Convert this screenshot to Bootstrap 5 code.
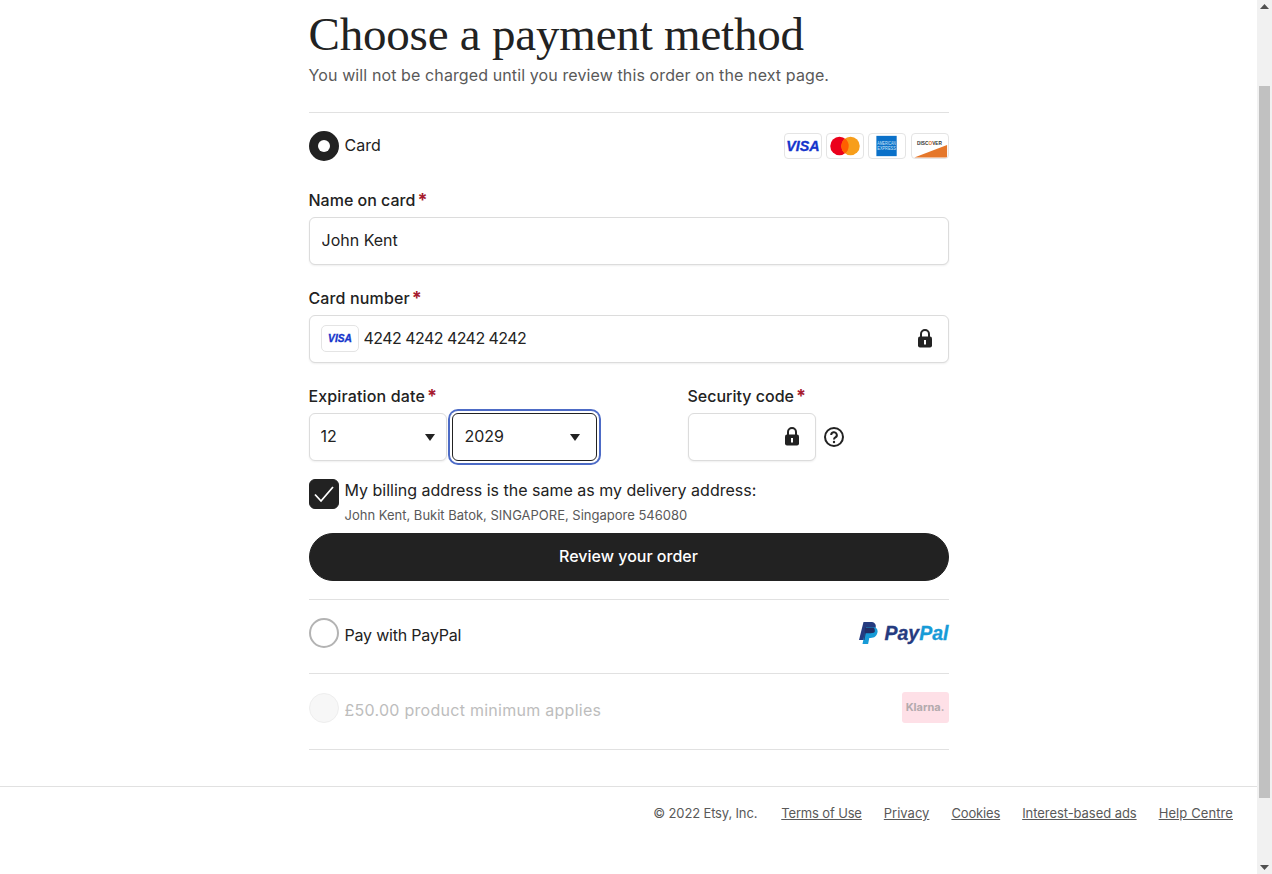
<!DOCTYPE html>
<html lang="en">
<head>
    <meta charset="UTF-8">
    <meta name="viewport" content="width=device-width, initial-scale=1.0">
    <title>Choose a payment method</title>
    <link href="https://cdn.jsdelivr.net/npm/bootstrap@5.3.2/dist/css/bootstrap.min.css" rel="stylesheet">
    <style>
        html, body { height: 100%; overflow: hidden; }
        body { font-family: Inter, "Noto Sans", sans-serif; color: #222; font-size: 16px; }
        .page-col { min-width: 0; height: 874px; }
        .checkout { width: 640px; margin: 0 auto; }
        .page-title { font-family: "Liberation Serif", serif; font-weight: 400; font-size: 47px; line-height: 56px; margin: 6px 0 0; letter-spacing: -.2px; }
        .page-sub { color: #595959; line-height: 24px; margin: 0; padding-top: 1px; padding-bottom: 25px; border-bottom: 1px solid #e1e1e1; letter-spacing: .11px; }
        .pay-row { height: 30px; }
        .card-row { margin-top: 18px; }
        .pay-radio.form-check-input { width: 30px; height: 30px; margin: 0; border: 2px solid #b3b3b3; flex: none; box-shadow: none; }
        .pay-radio.form-check-input:checked { background-color: #222; border-color: #222; background-image: url("data:image/svg+xml,<svg xmlns='http://www.w3.org/2000/svg' viewBox='-4 -4 8 8'><circle r='1.85' fill='white'/></svg>"); }
        .pay-radio.form-check-input:disabled { opacity: 1; background-color: #f7f7f7; border: 1px solid #eee; }
        .pay-text { line-height: 24px; margin-left: 6px; }
        .text-up { margin-top: -2px; }
        .text-down { margin-top: 4px; }
        .spaced { letter-spacing: -.2px; }
        .faded { color: #bdbdbd; letter-spacing: .27px; }
        .logo-box { width: 38px; height: 26px; border: 1px solid #e4e4e4; border-radius: 4px; display: block; background: #fff; }
        .logo-last { margin-left: 1px; }
        .field-label { font-weight: 500; line-height: 24px; margin: 0 0 5px; display: block; }
        .label-wide { letter-spacing: .14px; }
        .req { color: #a61a2e; font-weight: 700; font-size: 18px; line-height: 1; margin-left: 2px; }
        .name-block { margin-top: 27px; }
        .field-block { margin-top: 21px; }
        .etsy-input.form-control, .etsy-select.form-select { height: 48px; border: 1px solid #dcdcdc; border-radius: 6px; color: #222; font-size: 16px; box-shadow: 0 1px 2px rgba(34,34,34,.07); background-color: #fff; }
        .etsy-input.form-control { padding: 0 12px 2px; }
        .etsy-select.form-select { padding: 0 11px 2px; background-image: url("data:image/svg+xml,<svg xmlns='http://www.w3.org/2000/svg' viewBox='0 0 10 7'><path d='M0 0h10L5 7z' fill='%23222'/></svg>"); background-size: 10px 7px; background-position: right 11px center; }
        .select-month { width: 138px; }
        .select-year.form-select { width: 145px; margin-left: 5px; border-color: #222; box-shadow: 0 0 0 2px #fff, 0 0 0 4px #4d6bc6; padding-left: 12px; background-position: right 16px center; }
        .input-wrap { position: relative; }
        .input-card.form-control { padding-left: 54px; letter-spacing: -.55px; }
        .card-chip { position: absolute; left: 12px; top: 10px; width: 38px; height: 27px; border-radius: 5px; }
        .lock-icon { position: absolute; right: 16px; top: 14px; width: 16px; height: 19px; }
        .date-col { width: 379px; }
        .cvv-box { width: 128px; }
        .check-row { margin-top: 18px; }
        .check-mark.form-check-input { width: 30px; height: 30px; margin: 0; border-radius: 6px; flex: none; box-shadow: none; }
        .check-mark.form-check-input:checked { background-color: #222; border-color: #222; background-size: 30px 30px; background-image: url("data:image/svg+xml,<svg xmlns='http://www.w3.org/2000/svg' viewBox='0 0 30 30'><path d='M6 15.500l6 6.500L24 8' fill='none' stroke='white' stroke-width='1.8'/></svg>"); }
        .check-copy { margin-top: -1px; }
        .addr-line { font-size: 13px; color: #595959; line-height: 18px; margin: 4px 0 0 6px; }
        .review-btn.btn { height: 48px; padding: 0 0 2px; border-radius: 24px; background: #222; border-color: #222; color: #fff; font-weight: 500; font-size: 16px; margin-top: 9px; }
        .sep { border-top: 1px solid #e1e1e1; }
        .paypal-block { margin-top: 18px; padding-top: 18px; }
        .klarna-block { margin-top: 25px; padding-top: 18px; padding-bottom: 25px; }
        .klarna-inner { height: 32px; }
        .visa-mark { font-family: "Liberation Sans", sans-serif; font-weight: 700; font-style: italic; fill: #1434cb; stroke: #1434cb; stroke-width: .35px; }
        .paypal-word { font-family: "Liberation Sans", sans-serif; font-weight: 700; font-style: italic; font-size: 19.5px; line-height: 1; color: #253b80; margin-left: 7px; padding-top: 2px; -webkit-text-stroke: .3px currentColor; }
        .paypal-word span { color: #179bd7; }
        .klarna-box { width: 47px; height: 31px; margin-top: -1px; border-radius: 3px; background: #fee0e7; color: #b3aaad; font-weight: 700; font-size: 11px; }
        .foot-bar { border-top: 1px solid #e1e1e1; margin-top: 36px; padding: 17px 24px 0; font-size: 13px; line-height: 18px; color: #595959; gap: 22px; }
        .foot-bar a { color: #595959; }
        .foot-bar .copy { margin-right: 2px; letter-spacing: -.15px; }
        .foot-bar .link-tight { letter-spacing: -.15px; }
        .foot-bar .link-wide { letter-spacing: .1px; }
        .foot-bar .link-snug { letter-spacing: -.06px; }
        .fake-scroll { width: 15px; height: 874px; background: #f1f1f1; flex: none; position: relative; }
        .scroll-thumb { position: absolute; left: 2px; top: 86px; width: 11px; height: 712px; background: #c1c1c1; }
        .scroll-up, .scroll-down { position: absolute; left: 3px; width: 9px; height: 5px; }
        .scroll-up { top: 4px; }
        .scroll-down { bottom: 4px; }
    </style>
</head>
<body class="d-flex">
    <div class="page-col flex-grow-1 overflow-hidden">
        <div class="checkout">
            <h1 class="page-title">Choose a payment method</h1>
            <p class="page-sub">You will not be charged until you review this order on the next page.</p>

            <div class="pay-row card-row d-flex align-items-center">
                <input class="form-check-input pay-radio" type="radio" name="pay" checked>
                <span class="pay-text text-up flex-grow-1">Card</span>
                <div class="d-flex gap-1">
                    <svg class="logo-box" viewBox="0 0 38 26"><text class="visa-mark" x="19" y="18.500" font-size="15.500" text-anchor="middle">VISA</text></svg>
                    <svg class="logo-box" viewBox="0 0 38 26"><circle cx="13" cy="13" r="10" fill="#eb001b"/><circle cx="25" cy="13" r="10" fill="#f79e1b"/><path d="M19 5a10 10 0 0 1 0 16 10 10 0 0 1 0-16z" fill="#ff5f00"/></svg>
                    <svg class="logo-box" viewBox="0 0 38 26"><rect x="7.500" y="2" width="22" height="22" fill="#0b71c9"/><text x="18.500" y="11.500" font-size="5" fill="#cfe6f8" text-anchor="middle" font-family="Liberation Sans" textLength="20" lengthAdjust="spacingAndGlyphs">AMERICAN</text><text x="18.500" y="17.500" font-size="5" fill="#cfe6f8" text-anchor="middle" font-family="Liberation Sans" textLength="20" lengthAdjust="spacingAndGlyphs">EXPRESS</text></svg>
                    <svg class="logo-box logo-last" viewBox="0 0 38 26"><path d="M2 25.500L37.500 12V25.500z" fill="#e5772a"/><text x="18.500" y="12" font-size="5.300" font-weight="700" fill="#333" text-anchor="middle" font-family="Liberation Sans" textLength="27" lengthAdjust="spacingAndGlyphs">DISC<tspan fill="#e5772a">O</tspan>VER</text></svg>
                </div>
            </div>

            <div class="name-block">
                <label class="field-label" for="cardName">Name on card<span class="req">*</span></label>
                <input class="form-control etsy-input" id="cardName" value="John Kent">
            </div>

            <div class="field-block">
                <label class="field-label label-wide" for="cardNumber">Card number<span class="req">*</span></label>
                <div class="input-wrap">
                    <input class="form-control etsy-input input-card" id="cardNumber" value="4242 4242 4242 4242">
                    <svg class="logo-box card-chip" viewBox="0 0 38 27"><text class="visa-mark" x="19" y="17.500" font-size="11" text-anchor="middle">VISA</text></svg>
                    <svg class="lock-icon" viewBox="0 0 16 19"><path d="M4 8V5a4 4 0 0 1 8 0v3" fill="none" stroke="#222" stroke-width="2"/><rect x="1" y="7.500" width="14" height="11" rx="2" fill="#222"/><rect x="7" y="11" width="2" height="4.500" fill="#fff"/></svg>
                </div>
            </div>

            <div class="d-flex field-block">
                <div class="date-col">
                    <label class="field-label label-wide">Expiration date<span class="req">*</span></label>
                    <div class="d-flex">
                        <select class="form-select etsy-select select-month"><option>12</option></select>
                        <select class="form-select etsy-select select-year"><option>2029</option></select>
                    </div>
                </div>
                <div>
                    <label class="field-label" for="cvv">Security code<span class="req">*</span></label>
                    <div class="d-flex align-items-center">
                        <div class="input-wrap cvv-box">
                            <input class="form-control etsy-input" id="cvv">
                            <svg class="lock-icon" viewBox="0 0 16 19"><path d="M4 8V5a4 4 0 0 1 8 0v3" fill="none" stroke="#222" stroke-width="2"/><rect x="1" y="7.500" width="14" height="11" rx="2" fill="#222"/><rect x="7" y="11" width="2" height="4.500" fill="#fff"/></svg>
                        </div>
                        <svg class="ms-2" width="20" height="20" viewBox="0 0 20 20"><circle cx="10" cy="10" r="9" fill="none" stroke="#222" stroke-width="2"/><path d="M7.200 8a2.800 2.800 0 1 1 4.200 2.400c-.9.600-1.400 1-1.400 2" fill="none" stroke="#222" stroke-width="2"/><circle cx="10" cy="15" r="1.200" fill="#222"/></svg>
                    </div>
                </div>
            </div>

            <div class="d-flex check-row">
                <input class="form-check-input check-mark" type="checkbox" checked>
                <div class="check-copy">
                    <div class="pay-text">My billing address is the same as my delivery address:</div>
                    <div class="addr-line">John Kent, Bukit Batok, SINGAPORE, Singapore 546080</div>
                </div>
            </div>

            <button class="btn review-btn w-100 d-block" type="button">Review your order</button>

            <div class="sep paypal-block">
                <div class="pay-row d-flex align-items-center">
                    <input class="form-check-input pay-radio" type="radio" name="pay">
                    <span class="pay-text text-down spaced flex-grow-1">Pay with PayPal</span>
                    <div class="d-flex align-items-center">
                        <svg width="20" height="23" viewBox="0 0 20 23"><path d="M5.500 0h7.200c3.600 0 5.600 2 5 5.300-.7 4-3.500 6-7.300 6H7.700L6.500 18H1z" fill="#253b80"/><path d="M8 5h7.500c2.600.3 4.600 2 4 5.300-.7 3.900-3.300 5.700-6.700 5.700h-1.500l-1.200 6H4.500z" fill="#179bd7"/><path d="M7 5.500h8.600c.9.900 1.600 2.600 1.100 4.400-1 1-3.400 1.400-6.200 1.400H7.700L6.500 18H6z" fill="#222d65"/></svg>
                        <span class="paypal-word">Pay<span>Pal</span></span>
                    </div>
                </div>
            </div>

            <div class="sep klarna-block">
                <div class="klarna-inner d-flex align-items-center">
                    <input class="form-check-input pay-radio" type="radio" name="pay" disabled>
                    <span class="pay-text text-down faded flex-grow-1">£50.00 product minimum applies</span>
                    <div class="klarna-box d-flex align-items-center justify-content-center">Klarna.</div>
                </div>
            </div>
            <div class="sep"></div>
        </div>
        <div class="foot-bar d-flex justify-content-end">
            <span class="copy">© 2022 Etsy, Inc.</span>
            <a class="link-tight" href="#">Terms of Use</a>
            <a href="#">Privacy</a>
            <a class="link-tight" href="#">Cookies</a>
            <a class="link-snug" href="#">Interest-based ads</a>
            <a class="link-wide" href="#">Help Centre</a>
        </div>
    </div>
    <div class="fake-scroll">
        <svg class="scroll-up" viewBox="0 0 9 5"><path d="M4.500 0L9 5H0z" fill="#505050"/></svg>
        <div class="scroll-thumb"></div>
        <svg class="scroll-down" viewBox="0 0 9 5"><path d="M0 0h9L4.500 5z" fill="#505050"/></svg>
    </div>
</body>
</html>
